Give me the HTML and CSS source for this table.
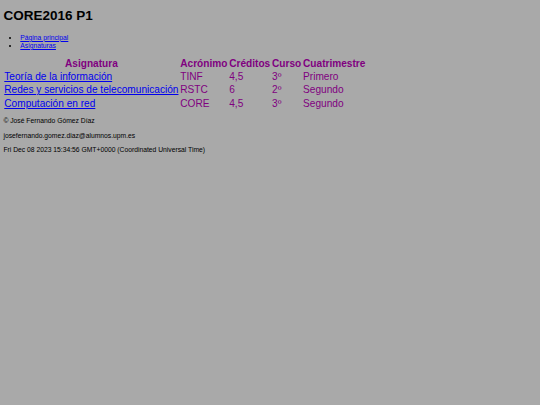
FILE: index.html
```html
<!DOCTYPE html>
<html lang="es">
<head>
<meta charset="utf-8">
<title>CORE2016 P1</title>
<link rel="stylesheet" href="styles.css">
</head>
<body>
<h1 class="title">CORE2016 P1</h1>
<ul class="nav">
  <li><a href="#">Página principal</a></li>
  <li><a href="#">Asignaturas</a></li>
</ul>
<table class="subjects">
  <tr>
    <th>Asignatura</th>
    <th>Acrónimo</th>
    <th>Créditos</th>
    <th>Curso</th>
    <th>Cuatrimestre</th>
  </tr>
  <tr>
    <td><a href="#">Teoría de la información</a></td>
    <td>TINF</td>
    <td>4,5</td>
    <td>3º</td>
    <td>Primero</td>
  </tr>
  <tr>
    <td><a href="#">Redes y servicios de telecomunicación</a></td>
    <td>RSTC</td>
    <td>6</td>
    <td>2º</td>
    <td>Segundo</td>
  </tr>
  <tr>
    <td><a href="#">Computación en red</a></td>
    <td>CORE</td>
    <td>4,5</td>
    <td>3º</td>
    <td>Segundo</td>
  </tr>
</table>
<footer class="foot">
  <p>© José Fernando Gómez Díaz</p>
  <p>josefernando.gomez.diaz@alumnos.upm.es</p>
  <p>Fri Dec 08 2023 15:34:56 GMT+0000 (Coordinated Universal Time)</p>
</footer>
</body>
</html>
```
FILE: styles.css
```css
html {
  background: #a9a9a9;
}
body {
  margin: 3.4px;
  font-family: "Liberation Sans", Arial, sans-serif;
  font-size: 6.75px;
  color: #000;
}
.title {
  font-size: 13.5px;
  line-height: 15.5px;
  font-weight: bold;
  margin: 5px 0 0 0;
}
.nav {
  margin: 10px 0 0 0;
  padding-left: 16.9px;
}
.nav li {
  line-height: 7.76px;
}
a {
  color: #0000ee;
}
.subjects {
  font-size: 10.125px;
  border-spacing: 0.9px;
  color: #800080;
  margin-top: 7.6px;
}
.subjects th,
.subjects td {
  padding: 0.6px 0.9px;
  line-height: 12.2px;
  text-align: left;
}
.subjects th {
  text-align: center;
  font-weight: bold;
}
.foot p {
  margin: 6.75px 0;
  line-height: 7.76px;
}
```
